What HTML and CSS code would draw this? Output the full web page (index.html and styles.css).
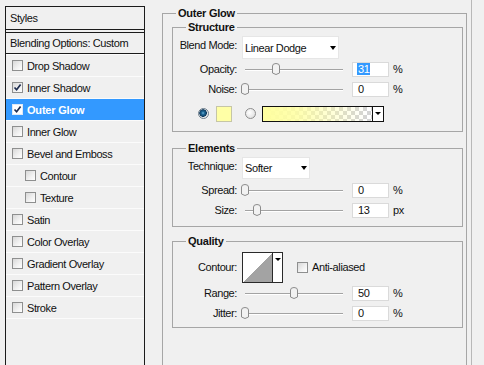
FILE: index.html
```html
<!DOCTYPE html>
<html>
<head>
<meta charset="utf-8">
<link rel="stylesheet" href="styles.css">
</head>
<body>
<div class="styles">
  <div class="styles-head">Styles</div>
  <div class="blend-opts">Blending Options: Custom</div>
  <ul class="fx-list">
    <li class="fx"><span class="cb"></span>Drop Shadow</li>
    <li class="fx"><span class="cb"><svg viewBox="0 0 9 9" width="9" height="9"><path d="M1.5 4.5 L3.6 6.8 L7.6 1.6" fill="none" stroke="#1d2c4f" stroke-width="1.7"/></svg></span>Inner Shadow</li>
    <li class="fx on"><span class="cb"><svg viewBox="0 0 9 9" width="9" height="9"><path d="M1.5 4.5 L3.6 6.8 L7.6 1.6" fill="none" stroke="#1d2c4f" stroke-width="1.7"/></svg></span>Outer Glow</li>
    <li class="fx"><span class="cb"></span>Inner Glow</li>
    <li class="fx"><span class="cb"></span>Bevel and Emboss</li>
    <li class="fx sub"><span class="cb"></span>Contour</li>
    <li class="fx sub"><span class="cb"></span>Texture</li>
    <li class="fx"><span class="cb"></span>Satin</li>
    <li class="fx"><span class="cb"></span>Color Overlay</li>
    <li class="fx"><span class="cb"></span>Gradient Overlay</li>
    <li class="fx"><span class="cb"></span>Pattern Overlay</li>
    <li class="fx"><span class="cb"></span>Stroke</li>
  </ul>
</div>

<div class="main">
  <fieldset class="grp outer">
    <legend>Outer Glow</legend>

    <fieldset class="grp inner structure">
      <legend>Structure</legend>
      <div class="row row-select">
        <span class="lbl">Blend Mode:</span>
        <div class="select sel-blend"><span>Linear Dodge</span><i class="arrow"></i></div>
      </div>
      <div class="row">
        <span class="lbl">Opacity:</span>
        <div class="slider"><span class="thumb" style="left:30px"><svg viewBox="0 0 8 12" width="8" height="12"><path d="M0.5 3 Q0.5 0.5 4 0.5 Q7.5 0.5 7.5 3 L7.5 10 L4 11.5 L0.5 10 Z" fill="#f2f2f2" stroke="#8c8c8c"/></svg></span></div>
        <span class="num"><span class="hl">31</span></span><span class="unit">%</span>
      </div>
      <div class="row">
        <span class="lbl">Noise:</span>
        <div class="slider"><span class="thumb" style="left:-1px"><svg viewBox="0 0 8 12" width="8" height="12"><path d="M0.5 3 Q0.5 0.5 4 0.5 Q7.5 0.5 7.5 3 L7.5 10 L4 11.5 L0.5 10 Z" fill="#f2f2f2" stroke="#8c8c8c"/></svg></span></div>
        <span class="num">0</span><span class="unit">%</span>
      </div>
      <div class="row row-color">
        <span class="radio on"></span>
        <span class="swatch"></span>
        <span class="radio"></span>
        <div class="gradpick"><div class="grad"></div><div class="gdrop"><i class="arrow small"></i></div></div>
      </div>
    </fieldset>

    <fieldset class="grp inner elements">
      <legend>Elements</legend>
      <div class="row row-select">
        <span class="lbl">Technique:</span>
        <div class="select sel-tech"><span>Softer</span><i class="arrow"></i></div>
      </div>
      <div class="row">
        <span class="lbl">Spread:</span>
        <div class="slider"><span class="thumb" style="left:-1px"><svg viewBox="0 0 8 12" width="8" height="12"><path d="M0.5 3 Q0.5 0.5 4 0.5 Q7.5 0.5 7.5 3 L7.5 10 L4 11.5 L0.5 10 Z" fill="#f2f2f2" stroke="#8c8c8c"/></svg></span></div>
        <span class="num">0</span><span class="unit">%</span>
      </div>
      <div class="row">
        <span class="lbl">Size:</span>
        <div class="slider"><span class="thumb" style="left:11px"><svg viewBox="0 0 8 12" width="8" height="12"><path d="M0.5 3 Q0.5 0.5 4 0.5 Q7.5 0.5 7.5 3 L7.5 10 L4 11.5 L0.5 10 Z" fill="#f2f2f2" stroke="#8c8c8c"/></svg></span></div>
        <span class="num">13</span><span class="unit">px</span>
      </div>
    </fieldset>

    <fieldset class="grp inner quality">
      <legend>Quality</legend>
      <div class="row row-contour">
        <span class="lbl">Contour:</span>
        <div class="contour"><div class="curve"></div><div class="cdrop"><i class="arrow small"></i></div></div>
        <span class="cb cb-aa"></span><span class="aa">Anti-aliased</span>
      </div>
      <div class="row">
        <span class="lbl">Range:</span>
        <div class="slider"><span class="thumb" style="left:48px"><svg viewBox="0 0 8 12" width="8" height="12"><path d="M0.5 3 Q0.5 0.5 4 0.5 Q7.5 0.5 7.5 3 L7.5 10 L4 11.5 L0.5 10 Z" fill="#f2f2f2" stroke="#8c8c8c"/></svg></span></div>
        <span class="num">50</span><span class="unit">%</span>
      </div>
      <div class="row">
        <span class="lbl">Jitter:</span>
        <div class="slider"><span class="thumb" style="left:-1px"><svg viewBox="0 0 8 12" width="8" height="12"><path d="M0.5 3 Q0.5 0.5 4 0.5 Q7.5 0.5 7.5 3 L7.5 10 L4 11.5 L0.5 10 Z" fill="#f2f2f2" stroke="#8c8c8c"/></svg></span></div>
        <span class="num">0</span><span class="unit">%</span>
      </div>
    </fieldset>
  </fieldset>
</div>
<div class="edge"></div>
</body>
</html>
```

FILE: styles.css
```css
html, body {
  margin: 0;
  padding: 0;
}
body {
  width: 484px;
  height: 365px;
  overflow: hidden;
  background: #f0f0f0;
  display: flex;
  align-items: flex-start;
  font-family: "Liberation Sans", Arial, sans-serif;
  font-size: 11px;
  letter-spacing: -0.4px;
  color: #111;
}

/* ---------- Left styles list ---------- */
.styles {
  margin: 6px 0 0 5px;
  width: 140px;
  height: 359px;
  box-sizing: border-box;
  border: 1px solid #1b1b1b;
  border-bottom: none;
  background: #f0f0f0;
  flex: none;
}
.styles-head {
  height: 22px;
  line-height: 22px;
  padding-left: 4px;
  border-bottom: 1px solid #1b1b1b;
}
.blend-opts {
  margin-top: 2px;
  height: 20px;
  line-height: 20px;
  padding-left: 4px;
  border-top: 1px solid #1b1b1b;
  border-bottom: 1px solid #1b1b1b;
}
.fx-list {
  list-style: none;
  margin: 0;
  padding: 0;
  border-top: 1px solid #fbfbfb;
}
.fx {
  height: 21px;
  display: flex;
  align-items: center;
  padding-left: 6px;
  border-bottom: 1px solid #fbfbfb;
}
.fx.sub {
  padding-left: 19px;
}
.fx.on {
  background: #3399ff;
  color: #fff;
  font-weight: bold;
  letter-spacing: -0.2px;
}
.cb {
  width: 11px;
  height: 11px;
  box-sizing: border-box;
  border: 1px solid #8e8f8f;
  background: linear-gradient(135deg, #d8d8d8 0%, #f2f2f2 60%, #ffffff 100%);
  margin-right: 4px;
  display: flex;
  align-items: center;
  justify-content: center;
  flex: none;
}
.fx.on .cb {
  background: #fff;
  border-color: #dfe9f5;
}
.cb svg {
  display: block;
}

/* ---------- Main area ---------- */
.main {
  margin: 7px 0 0 17px;
  width: 305px;
  height: 358px;
  overflow: hidden;
  flex: none;
}
.edge {
  margin-left: 4px;
  width: 1px;
  height: 365px;
  background: #b8b8b8;
  flex: none;
}
.grp {
  margin: 0;
  min-width: 0;
  border: 1px solid #a6a6a6;
  box-sizing: border-box;
}
.grp legend {
  font-weight: bold;
  letter-spacing: -0.25px;
  line-height: 13px;
  padding: 0 2px;
  color: #111;
}
.outer {
  width: 305px;
  height: 370px;
  padding: 1px 3px 0 9px;
}
.outer > legend {
  margin-left: 4px;
}
.inner {
  width: 291px;
  padding: 2px 0 9px 0;
}
.inner > legend {
  margin-left: 13px;
}
.elements {
  margin-top: 10px;
  padding-bottom: 6px;
}
.quality {
  margin-top: 8px;
  padding-top: 4px;
  padding-bottom: 4px;
}

.row {
  display: flex;
  align-items: center;
  height: 20px;
}
.lbl {
  width: 64px;
  margin-right: 5px;
  text-align: right;
  flex: none;
  line-height: 13px;
}
.row-select {
  align-items: flex-start;
  height: 23px;
}
.row-select .lbl {
  padding-top: 3px;
}

/* select */
.select {
  height: 23px;
  box-sizing: border-box;
  background: #fff;
  border: 1px solid #e6e6e6;
  display: flex;
  align-items: center;
  justify-content: space-between;
  padding: 0 2px 0 2px;
}
.sel-blend {
  width: 97px;
}
.sel-tech {
  width: 68px;
  height: 22px;
}
.arrow {
  display: block;
  width: 0;
  height: 0;
  border-left: 3.5px solid transparent;
  border-right: 3.5px solid transparent;
  border-top: 4px solid #000;
}
.arrow.small {
  border-left-width: 3px;
  border-right-width: 3px;
  border-top-width: 3px;
}

/* slider */
.slider {
  position: relative;
  width: 101px;
  height: 12px;
  flex: none;
}
.slider::before {
  content: "";
  position: absolute;
  left: 3px;
  right: 0;
  top: 6px;
  height: 1px;
  background: #a3a3a3;
  box-shadow: 0 1px 0 #fff;
}
.thumb {
  position: absolute;
  top: 0;
  width: 8px;
  height: 12px;
}
.thumb svg {
  display: block;
}

/* numeric field */
.num {
  width: 37px;
  height: 15px;
  box-sizing: border-box;
  background: #fff;
  border: 1px solid #dadada;
  padding-left: 5px;
  line-height: 13px;
  margin-left: 9px;
  flex: none;
}
.hl {
  background: #3399ff;
  color: #fff;
  padding: 0 1px;
  margin-left: -1px;
}
.unit {
  margin-left: 4px;
}

/* color row */
.row-color {
  margin-top: 6px;
  height: 17px;
}
.radio {
  width: 11px;
  height: 11px;
  box-sizing: border-box;
  border-radius: 50%;
  border: 1px solid #8d8d8d;
  background: radial-gradient(circle at 40% 40%, #ffffff 0, #e8e8e8 60%, #cfcfcf 100%);
  flex: none;
}
.radio.on {
  margin-left: 25px;
  border-color: #6d7e8c;
  background: radial-gradient(circle at 45% 45%, #6fb2d8 0, #1f6a98 1.5px, #0f3c60 3.5px, #d9dde0 4px, #f4f4f4 5px);
}
.swatch {
  width: 16px;
  height: 16px;
  box-sizing: border-box;
  margin-left: 7px;
  background: #ffffa6;
  border: 1px solid #c6c6a6;
  flex: none;
}
.swatch + .radio {
  margin-left: 13px;
}
.gradpick {
  margin-left: 6px;
  width: 122px;
  height: 16px;
  box-sizing: border-box;
  border: 1px solid #111;
  display: flex;
  flex: none;
}
.grad {
  flex: 1;
  background:
    linear-gradient(to right, rgba(255,255,160,1) 0%, rgba(255,255,160,0.85) 30%, rgba(255,255,160,0) 95%),
    repeating-conic-gradient(#d4d4d4 0 25%, #ffffff 0 50%) 0 0 / 8px 8px;
}
.gdrop {
  width: 10px;
  border-left: 1px solid #111;
  background: #fff;
  display: flex;
  align-items: center;
  justify-content: center;
}

/* contour */
.row-contour {
  height: 31px;
}
.contour {
  width: 41px;
  height: 31px;
  box-sizing: border-box;
  border: 1px solid #2a2a2a;
  display: flex;
  flex: none;
}
.curve {
  width: 29px;
  background: linear-gradient(to top left, #a3a3a3 50%, #ffffff 50%);
}
.cdrop {
  flex: 1;
  border-left: 1px solid #2a2a2a;
  background: #fff;
  display: flex;
  justify-content: center;
  padding-top: 5px;
}
.cb-aa {
  margin-left: 14px;
  margin-right: 4px;
}
.aa {
  line-height: 13px;
}
```
